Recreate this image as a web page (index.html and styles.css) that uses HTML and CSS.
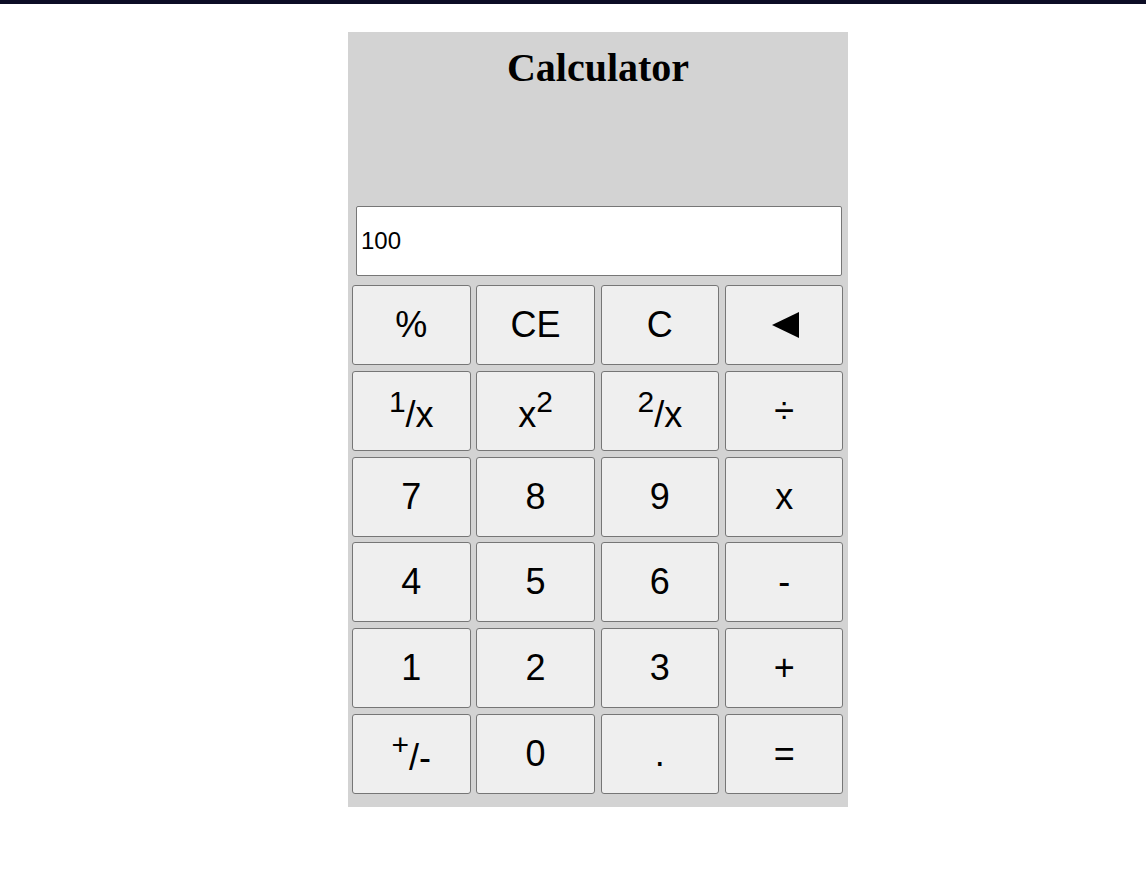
FILE: index.html
```html
<!DOCTYPE html>
<html lang="en">
<head>
<meta charset="utf-8">
<title>Calculator</title>
<link rel="stylesheet" href="styles.css">
</head>
<body>
<div class="topbar"></div>
<main class="calc">
  <header class="calc-head">
    <h1 class="title">Calculator</h1>
  </header>
  <input class="screen" type="text" value="100">
  <div class="keys">
    <button class="key">%</button>
    <button class="key">CE</button>
    <button class="key">C</button>
    <button class="key"><svg class="back" width="27" height="26" viewBox="0 0 27 26"><polygon points="0,13 27,0 27,26" fill="#000"/></svg></button>
    <button class="key"><span class="lbl"><sup>1</sup>/x</span></button>
    <button class="key"><span class="lbl">x<sup>2</sup></span></button>
    <button class="key"><span class="lbl"><sup>2</sup>/x</span></button>
    <button class="key">÷</button>
    <button class="key">7</button>
    <button class="key">8</button>
    <button class="key">9</button>
    <button class="key">x</button>
    <button class="key">4</button>
    <button class="key">5</button>
    <button class="key">6</button>
    <button class="key">-</button>
    <button class="key">1</button>
    <button class="key">2</button>
    <button class="key">3</button>
    <button class="key">+</button>
    <button class="key"><span class="lbl"><sup>+</sup>/-</span></button>
    <button class="key">0</button>
    <button class="key">.</button>
    <button class="key">=</button>
  </div>
</main>
</body>
</html>
```
FILE: styles.css
```css
html, body {
  margin: 0;
  padding: 0;
  background: #ffffff;
}

body {
  font-family: "Liberation Sans", Arial, sans-serif;
}

.topbar {
  height: 4px;
  background: #0c0d25;
}

.calc {
  width: 500px;
  margin: 28px 0 0 348px;
  background: #d3d3d3;
  padding-bottom: 13px;
}

.calc-head {
  height: 174px;
  padding-top: 14px;
  box-sizing: border-box;
}

.title {
  margin: 0;
  text-align: center;
  font-family: "Liberation Serif", "Times New Roman", serif;
  font-weight: bold;
  font-size: 40px;
  line-height: 44px;
  color: #000;
}

.screen {
  display: block;
  box-sizing: border-box;
  width: 486px;
  height: 70px;
  margin: 0 0 0 8px;
  padding: 0 0 0 4px;
  border: 1px solid #767676;
  border-radius: 2px;
  background: #fff;
  font-family: "Liberation Sans", Arial, sans-serif;
  font-size: 24px;
  color: #000;
  outline: none;
}

.keys {
  margin-top: 9px;
  padding-left: 4px;
  display: grid;
  grid-template-columns: repeat(4, 118.5px);
  grid-auto-rows: 80px;
  gap: 5.8px;
}

.key {
  box-sizing: border-box;
  margin: 0;
  padding: 0;
  background: #efefef;
  border: 1px solid #767676;
  border-radius: 3px;
  font-family: "Liberation Sans", Arial, sans-serif;
  font-size: 36px;
  color: #000;
  display: flex;
  align-items: center;
  justify-content: center;
  line-height: normal;
}

.lbl {
  display: block;
}

.key sup {
  font-size: 30px;
  line-height: normal;
  vertical-align: 15px;
}

.back {
  display: block;
  margin-left: 2px;
}
```
